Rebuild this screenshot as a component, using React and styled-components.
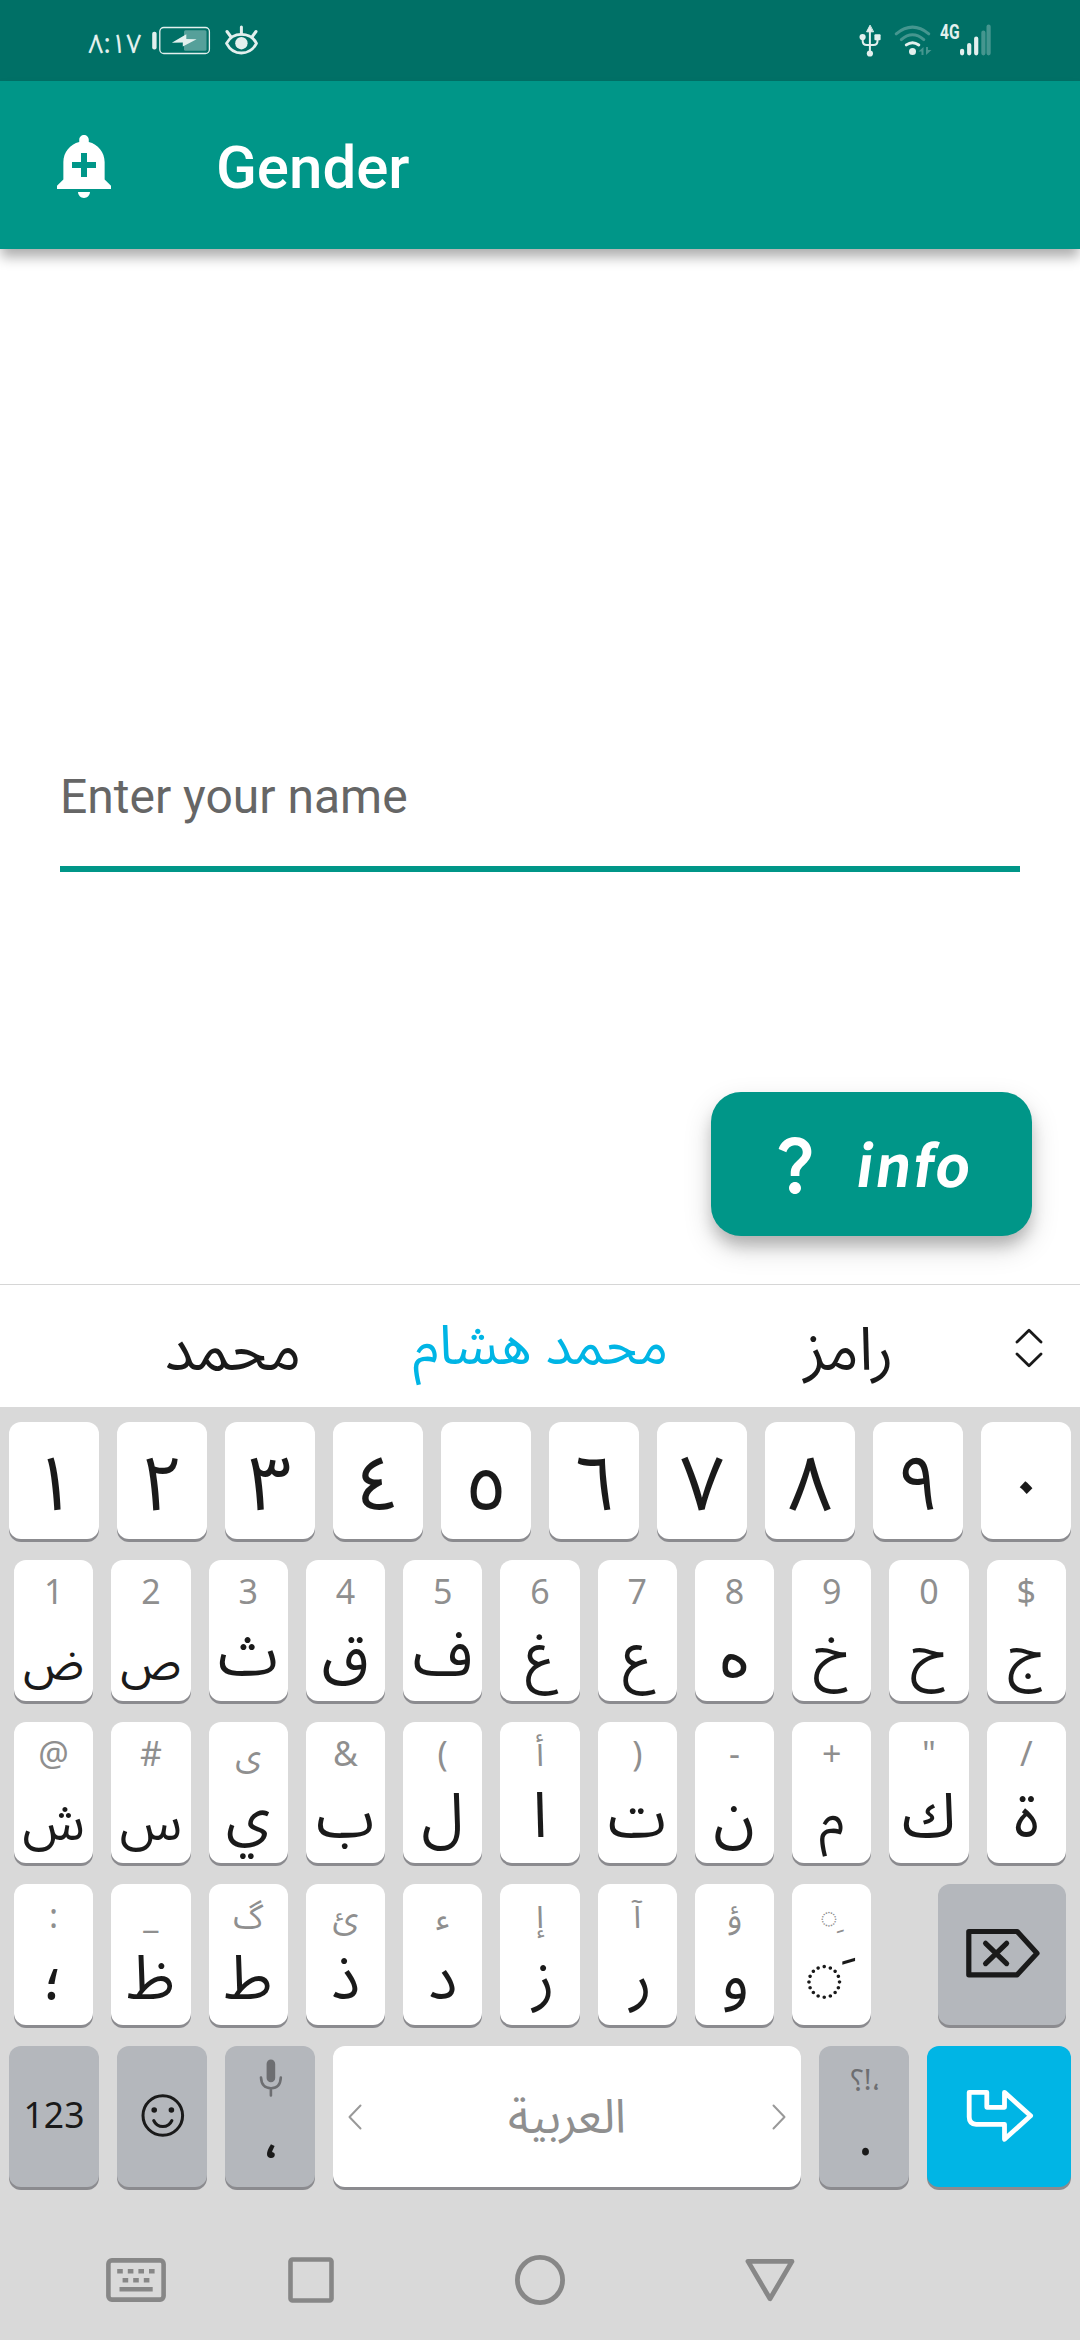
import React from 'react';
import styled, { createGlobalStyle, css } from 'styled-components';

const teal = '#009688';
const ink = '#1a1a1a';
const faint = '#8f8f8f';
const arabic = "'Noto Sans Arabic', 'Noto Sans', 'DejaVu Sans', sans-serif";
const latin = "'Noto Sans', 'Noto Sans Arabic', 'DejaVu Sans', sans-serif";

const GlobalStyle = createGlobalStyle`
  * { box-sizing: border-box; }
  body { margin: 0; background: #fff; }
  svg { display: block; flex: none; }
`;

/* Puts the text's baseline exactly y pixels below the top of its box. */
const baseline = y => css`
  line-height: 0;
  white-space: nowrap;
  &::before { content: ''; display: inline-block; height: ${y}px; }
`;

const Screen = styled.div`
  width: 1080px;
  height: 2340px;
  display: flex;
  flex-direction: column;
  overflow: hidden;
  background: #fff;
`;

/* ---------- status bar ---------- */
const StatusBar = styled.div`
  height: 81px;
  flex: none;
  display: flex;
  justify-content: space-between;
  padding: 0 89px 0 88px;
  background: #007066;
  color: #e3f0ee;
`;
const StatusGroup = styled.div`
  display: flex;
  align-items: flex-start;
`;
const Clock = styled.div`
  ${baseline(52.5)}
  width: 62px;
  font-family: ${arabic};
  font-size: 27px;
`;
const Network = styled.div`
  ${baseline(39)}
  width: 20px;
  margin-left: 8px;
  font: 700 20px/0 Roboto, sans-serif;
  transform: scaleX(0.78);
  transform-origin: 0 0;
`;

/* ---------- app bar ---------- */
const AppBar = styled.header`
  height: 168px;
  flex: none;
  display: flex;
  align-items: center;
  gap: 96px;
  padding-left: 48px;
  background: ${teal};
  box-shadow: 0 9px 12px -1px rgba(0, 0, 0, 0.32);
  position: relative;
`;
const Title = styled.h1`
  ${baseline(107)}
  margin: 0;
  align-self: flex-start;
  color: #fff;
  font-family: Roboto, sans-serif;
  font-size: 60px;
  font-weight: 500;
`;

/* ---------- content ---------- */
const Content = styled.main`
  flex: 1;
  display: flex;
  flex-direction: column;
  padding: 500px 48px 0 60px;
`;
const NameField = styled.div`
  ${baseline(63.5)}
  width: 960px;
  height: 123px;
  border-bottom: 6px solid ${teal};
  color: #666;
  font-family: Roboto, sans-serif;
  font-size: 48px;
`;
const InfoButton = styled.button`
  align-self: flex-end;
  width: 321px;
  height: 144px;
  margin-top: 220px;
  padding: 0 0 0 48px;
  display: flex;
  align-items: center;
  gap: 23px;
  border: 0;
  border-radius: 30px;
  background: ${teal};
  color: #fff;
  box-shadow: 0 11px 15px -2px rgba(0, 0, 0, 0.2), 0 12px 28px rgba(0, 0, 0, 0.17);
`;
const InfoLabel = styled.span`
  ${baseline(95)}
  align-self: flex-start;
  font-family: 'Noto Sans CJK SC', 'Noto Sans', sans-serif;
  font-size: 56.5px;
  font-weight: 700;
  letter-spacing: 1.7px;
  transform: skewX(-8deg);
  transform-origin: 0 95px;
`;

/* ---------- suggestions ---------- */
const Suggestions = styled.div`
  flex: none;
  height: 123px;
  display: grid;
  grid-template-columns: 306px 306px 306px 62px;
  padding-left: 80px;
  border-top: 1px solid #d6d6d6;
`;
const Suggestion = styled.div`
  ${p => baseline(p.$best ? 79 : 84.5)}
  text-align: center;
  padding-left: ${p => p.$inset || 0}px;
  color: ${p => (p.$best ? '#00b5e5' : ink)};
  font-family: ${arabic};
  font-size: ${p => (p.$best ? 54 : 60)}px;
`;
const Expand = styled.div`
  display: flex;
  justify-content: center;
  padding-top: 42px;
`;

/* ---------- keyboard ---------- */
const Keyboard = styled.div`
  flex: none;
  height: 933px;
  display: flex;
  flex-direction: column;
  gap: 21px;
  padding-top: 15px;
  background: #d9d9d9;
`;
const KeyRow = styled.div`
  display: flex;
  gap: 18px;
  height: ${p => p.$h || 141}px;
  padding: 0 ${p => (p.$wide ? 9 : 14)}px;
`;
const tones = { light: '#fff', grey: '#b4b7bc', accent: '#00b5e5' };
const KeyCap = styled.div`
  flex: ${p => (p.$w ? `0 0 ${p.$w}px` : '1 1 0')};
  min-width: 0;
  display: flex;
  flex-direction: column;
  align-items: center;
  border-radius: 12px;
  background: ${p => tones[p.$tone || 'light']};
  box-shadow: 0 3px 0 #8b8b8f;
  color: ${ink};
  margin-left: ${p => (p.$push ? 'auto' : 0)};
`;
const Hint = styled.div`
  ${baseline(44)}
  height: 44px;
  margin-left: ${p => p.$dx || 0}px;
  color: ${p => (p.$dark ? '#6d6e71' : faint)};
  font-family: ${latin};
  font-size: ${p => p.$size || 34}px;
`;
const Letter = styled.div`
  ${p => baseline(71 + (p.$dy || 0))}
  font-family: ${p => p.$family || arabic};
  font-size: ${p => p.$size || 61}px;
  margin-left: ${p => p.$dx || 0}px;
`;
const Digit = styled.div`
  ${baseline(88)}
  font-family: ${arabic};
  font-size: 77px;
`;
const Mode = styled.div`
  ${baseline(82)}
  font-family: ${latin};
  font-size: 35.5px;
`;
const Mark = styled.span`
  margin-left: ${p => p.$shift}px;
`;
const SpaceBar = styled(KeyCap)`
  flex-direction: row;
  justify-content: space-between;
  padding: 0 15px;
`;
const SpaceLabel = styled.div`
  ${baseline(86.5)}
  align-self: flex-start;
  color: ${faint};
  font-family: ${arabic};
  font-size: 47px;
`;
const IconKey = styled(KeyCap)`
  justify-content: center;
`;
const MicSlot = styled.div`
  height: 44px;
  padding-top: 13px;
`;
const NavBar = styled.nav`
  height: 120px;
  margin-top: 12px;
  display: grid;
  grid-template-columns: 272px 78px 380px 80px;
  align-items: center;
  justify-items: center;
`;

/* Stroke icon drawn in its own box: [x, y, width, height] of the view box. */
const Icon = ({ box, stroke = 'currentColor', width = 3, children }) => {
  const [, , w, h] = box;
  return (
    <svg width={w} height={h} viewBox={box.join(' ')} fill="none" stroke={stroke} strokeWidth={width} strokeLinecap="round" strokeLinejoin="round">
      {children}
    </svg>
  );
};

const digits = '١٢٣٤٥٦٧٨٩٠'.split('');

const rowOne = [
  { c: 'ض', h: '1', size: 46.5, dy: 4 },
  { c: 'ص', h: '2', size: 46.5, dy: 4 },
  { c: 'ث', h: '3' },
  { c: 'ق', h: '4' },
  { c: 'ف', h: '5' },
  { c: 'غ', h: '6', size: 57, dy: -1 },
  { c: 'ع', h: '7', size: 57, dy: -1 },
  { c: 'ه', h: '8', family: "'DejaVu Sans', sans-serif", size: 62, dy: 1 },
  { c: 'خ', h: '9', size: 57, dy: -3 },
  { c: 'ح', h: '0', size: 57, dy: -3 },
  { c: 'ج', h: '$', size: 57, dy: -3 },
];
const rowTwo = [
  { c: 'ش', h: '@', size: 51.5, dy: 3 },
  { c: 'س', h: '#', size: 51.5, dy: 3 },
  { c: 'ي', h: 'ى', size: 58, dy: -2 },
  { c: 'ب', h: '&', size: 59 },
  { c: 'ل', h: '(' },
  { c: 'ا', h: 'أ', size: 63 },
  { c: 'ت', h: ')', size: 59 },
  { c: 'ن', h: '-' },
  { c: 'م', h: '+', size: 53, dy: -1 },
  { c: 'ك', h: '"' },
  { c: 'ة', h: '/' },
];
const rowThree = [
  { c: '؛', h: ':' },
  { c: 'ظ', h: '_' },
  { c: 'ط', h: 'گ' },
  { c: 'ذ', h: 'ئ' },
  { c: 'د', h: 'ء' },
  { c: 'ز', h: 'إ', dx: 7 },
  { c: 'ر', h: 'آ', dx: 7 },
  { c: 'و', h: 'ؤ', dx: 2 },
];

const LetterKey = ({ k, w }) => (
  <KeyCap $w={w}>
    <Hint>{k.h}</Hint>
    <Letter $size={k.size} $dy={k.dy} $dx={k.dx} $family={k.family}>{k.c}</Letter>
  </KeyCap>
);

export default function App() {
  return (
    <Screen>
      <GlobalStyle />
      <StatusBar>
        <StatusGroup>
          <Clock>٨:١٧</Clock>
          <Icon box={[150, 0, 110, 81]}>
            <rect x="152.2" y="31.8" width="4.4" height="17.6" rx="2" fill="currentColor" stroke="none" />
            <rect x="159.8" y="27.5" width="49.6" height="26" rx="4" strokeWidth="1.3" />
            <rect x="184" y="30.3" width="22.5" height="20.4" rx="1.5" fill="currentColor" opacity="0.38" stroke="none" />
            <path d="M171.8 42.7 186.3 34.3V39L196.6 39.3 182.8 46.6V42.4Z" fill="currentColor" stroke="none" />
            <path d="M226.5 43.3C229.5 37.5 235 34.3 241.4 34.3S253.5 37.5 256.5 43.3C253.5 49 248 53 241.4 53S229.5 49 226.5 43.3Z" strokeWidth="2.8" />
            <circle cx="241.4" cy="43.2" r="6.2" fill="currentColor" stroke="none" />
            <path d="M241.4 27V34M227 31.5 231 37M256 31.5 252 37" />
          </Icon>
        </StatusGroup>
        <StatusGroup>
          <Icon box={[858, 0, 74, 81]}>
            <path d="M869.9 30V53M862.7 38V41Q862.7 45 866.7 45H873.5Q877.5 45 877.5 41V38" strokeWidth="2" />
            <path d="M869.9 25.5 866.6 31.8H873.2Z" fill="currentColor" strokeWidth="1" />
            <circle cx="869.9" cy="53.5" r="3.1" fill="currentColor" stroke="none" />
            <circle cx="862.6" cy="37" r="3.1" fill="currentColor" stroke="none" />
            <rect x="874.4" y="34.2" width="6.2" height="6" rx="1" fill="currentColor" stroke="none" />
            <path d="M896.2 33.8Q912.5 20.5 928.8 33.8M901.3 39.6Q912.5 30 923.8 39.6" opacity="0.3" />
            <path d="M906.3 44.9Q912.5 40.5 918.8 44.9" />
            <circle cx="912.5" cy="51.5" r="3.5" fill="currentColor" stroke="none" />
            <path d="M918.5 51.5 923.5 47V55H921.5V51.5ZM926 47H928V50L931.5 50 926 55Z" fill="currentColor" stroke="none" opacity="0.3" />
          </Icon>
          <Network>4G</Network>
          <Icon box={[957.7, 0, 31, 81]} width={4.2}>
            <path d="M959.8 50.8V53.3M966.9 45V53.3M973.9 38.5V53.3" />
            <path d="M981.1 32.5V53.3M986.3 26.5V53.3" opacity="0.3" />
          </Icon>
        </StatusGroup>
      </StatusBar>

      <AppBar>
        <svg width="72" height="72" viewBox="0 0 24 24" fill="#fff">
          <path d="M10.01 21.01c0 1.1.89 1.99 1.99 1.99s1.99-.89 1.99-1.99h-3.98zm8.87-4.19V11c0-3.25-2.25-5.97-5.29-6.69v-.72C13.59 2.71 12.88 2 12 2s-1.59.71-1.59 1.59v.72C7.37 5.03 5.12 7.75 5.12 11v5.82L3 18.94V20h18v-1.06l-2.12-2.12zM16 13.01h-3v3h-2v-3H8V11h3V8h2v3h3v2.01z" />
        </svg>
        <Title>Gender</Title>
      </AppBar>

      <Content>
        <NameField>Enter your name</NameField>
        <InfoButton>
          <svg width="72" height="72" viewBox="0 0 24 24" fill="#fff">
            <path d="M11.07 12.85c.77-1.39 2.25-2.21 3.11-3.44.91-1.29.4-3.7-2.18-3.7-1.69 0-2.52 1.28-2.87 2.34L6.54 6.96C7.25 4.83 9.18 3 11.99 3c2.35 0 3.96 1.07 4.78 2.41.7 1.15 1.11 3.3.03 4.9-1.2 1.77-2.35 2.31-2.97 3.45-.25.46-.35.76-.35 2.24h-2.89c-.01-.78-.13-2.05.48-3.15zM14 20c0 1.1-.9 2-2 2s-2-.9-2-2 .9-2 2-2 2 .9 2 2z" />
          </svg>
          <InfoLabel>info</InfoLabel>
        </InfoButton>
      </Content>

      <Suggestions>
        <Suggestion>محمد</Suggestion>
        <Suggestion $best $inset={3} dir="rtl">محمد هشام</Suggestion>
        <Suggestion $inset={7}>رامز</Suggestion>
        <Expand>
          <Icon box={[0, 0, 30, 42]} stroke={ink} width={2.8}>
            <path d="M3 15 15 3.2 27 15M3 27 15 38.8 27 27" />
          </Icon>
        </Expand>
      </Suggestions>

      <Keyboard>
        <KeyRow $wide $h={117}>
          {digits.map(d => <KeyCap key={d}><Digit>{d}</Digit></KeyCap>)}
        </KeyRow>
        <KeyRow>{rowOne.map(k => <LetterKey key={k.c} k={k} />)}</KeyRow>
        <KeyRow>{rowTwo.map(k => <LetterKey key={k.c} k={k} />)}</KeyRow>
        <KeyRow>
          {rowThree.map(k => <LetterKey key={k.c} k={k} w={79.27} />)}
          <KeyCap $w={79.27}>
            <Hint $size={30}>◌<Mark $shift={-2}>&nbsp;ِ</Mark></Hint>
            <Letter $size={57} $dx={-3}>◌<Mark $shift={-3}>&nbsp;َ</Mark></Letter>
          </KeyCap>
          <IconKey $w={128} $tone="grey" $push>
            <Icon box={[964, 1926, 76, 58]} stroke={ink} width={5.2}>
              <path d="M968.8 1931.5H1017.2L1037 1953.3 1017.2 1974.8H968.8Z" />
              <path d="M985.6 1943.3 1006.6 1963.6M1006.6 1943.3 985.6 1963.6" />
            </Icon>
          </IconKey>
        </KeyRow>
        <KeyRow $wide>
          <KeyCap $w={90} $tone="grey"><Mode>123</Mode></KeyCap>
          <IconKey $w={90} $tone="grey">
            <Icon box={[-24, -26, 48, 48]} stroke={ink} width={3}>
              <circle cx="0.8" cy="-3.5" r="19.8" />
              <circle cx="-7.8" cy="-9" r="2.8" fill={ink} stroke="none" />
              <circle cx="9.4" cy="-9" r="2.8" fill={ink} stroke="none" />
              <path d="M-8.3 1.5Q-5.5 7.6 0.8 7.6T9.9 1.5" />
            </Icon>
          </IconKey>
          <KeyCap $w={90} $tone="grey">
            <MicSlot>
              <Icon box={[-14, 0, 28, 38]} stroke="#6d6e71" width={2.6}>
                <rect x="-3.4" y="0.6" width="8.6" height="22.6" rx="4.3" fill="#6d6e71" stroke="none" />
                <path d="M-9 18.5Q-8.5 29 0.9 29.2T10.8 18.5M0.9 29.5V36.5" />
              </Icon>
            </MicSlot>
            <Letter $dy={-3} $dx={3}>،</Letter>
          </KeyCap>
          <SpaceBar $w={468}>
            <Icon box={[0, 0, 14, 26]} stroke="#999" width={2}>
              <path d="M12.5 1.5 1.5 13 12.5 24.5" />
            </Icon>
            <SpaceLabel>العربية</SpaceLabel>
            <Icon box={[0, 0, 14, 26]} stroke="#999" width={2}>
              <path d="M1.5 1.5 12.5 13 1.5 24.5" />
            </Icon>
          </SpaceBar>
          <KeyCap $w={90} $tone="grey">
            <Hint $dark $size={29} $dx={4} dir="rtl">،!؟</Hint>
            <Letter $size={56} $dy={-6} $dx={3}>.</Letter>
          </KeyCap>
          <IconKey $w={144} $tone="accent">
            <Icon box={[963, 2087, 72, 58]} stroke="#fff" width={4.8}>
              <path d="M969.2 2091.3H986.8V2106.3H1004.5V2091.3L1030.6 2114.8 1004.5 2138.3V2123.3H976.2Q969.2 2123 969.2 2116Z" />
            </Icon>
          </IconKey>
        </KeyRow>
        <NavBar>
          <Icon box={[0, 0, 60, 44]} stroke="#878787" width={4.6}>
            <rect x="2.4" y="2.4" width="55.2" height="39.2" rx="3.5" />
            <g strokeLinecap="butt">
              <path d="M11.2 13.2H49" strokeDasharray="5.6 5" />
              <path d="M16.6 22.2H44.2" strokeDasharray="5.6 5" />
              <path d="M13.5 31.2H46.7" />
            </g>
          </Icon>
          <Icon box={[0, 0, 46, 46]} stroke="#878787" width={4.6}>
            <rect x="2.5" y="2.5" width="41" height="41" rx="2" />
          </Icon>
          <Icon box={[0, 0, 50, 50]} stroke="#878787" width={4.8}>
            <circle cx="25" cy="25" r="22.6" />
          </Icon>
          <Icon box={[0, 0, 50, 44]} stroke="#878787" width={4.8}>
            <path d="M3 3.4H47L25 40.8Z" />
          </Icon>
        </NavBar>
      </Keyboard>
    </Screen>
  );
}
